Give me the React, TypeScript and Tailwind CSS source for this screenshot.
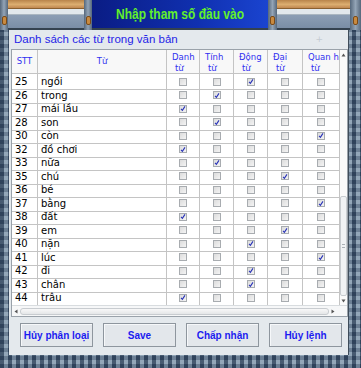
import React from 'react';

type Row = { stt: number; word: string; type: number };

// type: 0 danh, 1 tính, 2 động, 3 đại, 4 quan hệ, -1 none
const rows: Row[] = [
  { stt: 25, word: 'ngồi', type: 2 },
  { stt: 26, word: 'trong', type: 1 },
  { stt: 27, word: 'mái lầu', type: 0 },
  { stt: 28, word: 'son', type: 1 },
  { stt: 30, word: 'còn', type: 4 },
  { stt: 32, word: 'đồ chơi', type: 0 },
  { stt: 33, word: 'nữa', type: 1 },
  { stt: 35, word: 'chú', type: 3 },
  { stt: 36, word: 'bé', type: -1 },
  { stt: 37, word: 'bằng', type: 4 },
  { stt: 38, word: 'đất', type: 0 },
  { stt: 39, word: 'em', type: 3 },
  { stt: 40, word: 'nặn', type: 2 },
  { stt: 41, word: 'lúc', type: 4 },
  { stt: 42, word: 'đi', type: 2 },
  { stt: 43, word: 'chân', type: 2 },
  { stt: 44, word: 'trâu', type: 0 },
];

const headers = [
  ['Danh', 'từ'],
  ['Tính', 'từ'],
  ['Động', 'từ'],
  ['Đại', 'từ'],
  ['Quan hệ', 'từ'],
];

const gridCols = 'grid grid-cols-[26px_129px_33px_34px_34px_35px_37px]';
const plaid =
  'bg-[#5e748c] bg-[linear-gradient(90deg,rgba(36,54,78,0.6)_50%,rgba(190,208,222,0.35)_50%),linear-gradient(0deg,rgba(36,54,78,0.5)_50%,rgba(190,208,222,0.3)_50%)] bg-[length:8px_8px,8px_8px]';

function Check({ on }: { on: boolean }) {
  return (
    <div className="w-[8px] h-[8px] border border-[#a8acb0] bg-[linear-gradient(135deg,#dcdcdc,#f4f4f4)] flex items-center justify-center">
      {on && (
        <svg width="7" height="7" viewBox="0 0 7 7">
          <path d="M1.2 3.8 L2.8 5.6 L5.8 1" stroke="#2a34b8" strokeWidth="1.3" fill="none" />
        </svg>
      )}
    </div>
  );
}

function Wood({ w }: { w: string }) {
  return (
    <div className={`${w} h-full flex flex-col`}>
      <div className="h-[9px] bg-[linear-gradient(180deg,#b8844a,#dcae70_55%,#c08850)] border-b border-[#8a6030]" />
      <div className="h-[6px] bg-[#e2e8ec] border-b border-[#aab6c0]" />
      <div className="flex-1 bg-[linear-gradient(180deg,#8c9eb4,#7a8ea6)]" />
      <div className="h-[2px] bg-[#34424f]" />
    </div>
  );
}

function Pillar({ w }: { w: string }) {
  return (
    <div className={`${w} h-full bg-[linear-gradient(90deg,#55677b,#93a4b6,#55677b)] flex items-end justify-center pb-[5px]`}>
      <div className="w-[5px] h-[9px] rounded-[2px] bg-[#c88a40] border border-[#7a4a18]" />
    </div>
  );
}

function Btn({ label }: { label: string }) {
  return (
    <div className="w-[73px] h-[24px] border border-[#8e969e] bg-[#e3e7eb] shadow-[inset_1px_1px_0_#f6f8fa] flex items-center justify-center whitespace-nowrap text-[10px] font-bold text-[#1c1cf0]" style={{ fontFamily: '"Liberation Sans", sans-serif' }}>
      {label}
    </div>
  );
}

export default function App() {
  return (
    <div className={`w-[361px] h-[368px] flex flex-col overflow-hidden ${plaid}`} style={{ fontFamily: '"DejaVu Sans", sans-serif' }}>
      {/* title bar */}
      <div className="h-[30px] flex">
        <Pillar w="w-[8px]" />
        <Wood w="w-[76px]" />
        <Pillar w="w-[8px]" />
        <div className="w-[176px] h-full bg-[linear-gradient(90deg,#0a1c84,#1030b0_60%,#1a44d0)] border-b-2 border-[#34424f] flex items-center justify-center">
          <span className="text-[15px] font-bold text-[#62f02c] scale-x-[0.8] whitespace-nowrap" style={{ fontFamily: '"Liberation Sans", sans-serif' }}>
            Nhập tham số đầu vào
          </span>
        </div>
        <Pillar w="w-[9px]" />
        <Wood w="w-[73px]" />
        <Pillar w="w-[11px]" />
      </div>

      {/* panel */}
      <div className="flex h-[325px]">
        <div className="w-[9px]" />
        <div className="w-[340px] h-full bg-[#e4e9ed] border-r border-[#3e4c5a] flex flex-col">
          <div className="h-[19px] pl-[5px] flex items-center justify-between pr-[25px]">
            <span className="text-[11.5px] text-[#2424e8]" style={{ fontFamily: '"Liberation Sans", sans-serif' }}>
              Danh sách các từ trong văn bản
            </span>
            <span className="text-[9px] text-[#c4ccd2]">+</span>
          </div>

          {/* table */}
          <div className="ml-[2px] w-[337px] h-[268px] bg-white border border-[#9aa2aa] flex flex-col">
            <div className="flex flex-1 overflow-hidden">
              <div className="w-[328px] flex flex-col">
                <div className={`${gridCols} h-[24px] bg-[#f8f8f8] text-[#3030f0] text-[8.5px]`}>
                  <div className="border-r border-b border-[#c4c4c4] flex items-center justify-center">STT</div>
                  <div className="border-r border-b border-[#c4c4c4] flex items-center justify-center">Từ</div>
                  {headers.map((h, i) => (
                    <div key={i} className="border-r border-b border-[#c4c4c4] flex flex-col items-start pl-[5px] pt-[2px] leading-[11px] overflow-hidden whitespace-nowrap">
                      <span>{h[0]}</span>
                      <span className="pl-[3px]">{h[1]}</span>
                    </div>
                  ))}
                </div>
                {rows.map((r) => (
                  <div key={r.stt} className={`${gridCols} h-[13.5px] text-[10px] text-black`}>
                    <div className="border-r border-b border-[#c4c4c4] flex items-center pl-[3px]">{r.stt}</div>
                    <div className="border-r border-b border-[#c4c4c4] flex items-center pl-[3px]">{r.word}</div>
                    {[0, 1, 2, 3, 4].map((c) => (
                      <div key={c} className="border-r border-b border-[#c4c4c4] flex items-center justify-center">
                        <Check on={r.type === c} />
                      </div>
                    ))}
                  </div>
                ))}
              </div>
              {/* vertical scrollbar */}
              <div className="w-[9px] flex flex-col items-center bg-[#fafafa] pt-[3px] pb-[2px]">
                <svg width="5" height="4" viewBox="0 0 5 4"><path d="M2.5 0.5 L4.5 3.5 L0.5 3.5 Z" fill="#555" /></svg>
                <div className="flex-1" />
                <div className="w-[7px] h-[100px] border border-[#c8ccd0] rounded-[2px] bg-[#f0f2f4] flex items-center justify-center">
                  <div className="w-[3px] h-[4px] border-y border-[#aab0b6]" />
                </div>
                <div className="h-[3px]" />
                <svg width="5" height="4" viewBox="0 0 5 4"><path d="M0.5 0.5 L4.5 0.5 L2.5 3.5 Z" fill="#555" /></svg>
              </div>
            </div>
            {/* horizontal scrollbar */}
            <div className="h-[11px] border-t border-[#d8dcdf] bg-[#f6f7f8] flex items-center px-[2px] gap-[2px]">
              <svg width="4" height="5" viewBox="0 0 4 5"><path d="M0.5 2.5 L3.5 0.5 L3.5 4.5 Z" fill="#555" /></svg>
              <div className="flex-1 h-[7px] border border-[#c8ccd0] rounded-[3px] bg-[linear-gradient(180deg,#f8f8f8,#e4e6e8)]" />
              <svg width="4" height="5" viewBox="0 0 4 5"><path d="M0.5 0.5 L3.5 2.5 L0.5 4.5 Z" fill="#555" /></svg>
              <div className="w-[8px]" />
            </div>
          </div>

          {/* buttons */}
          <div className="mt-[6px] pl-[11px] flex gap-[10px]">
            <Btn label="Hủy phân loại" />
            <Btn label="Save" />
            <Btn label="Chấp nhận" />
            <Btn label="Hủy lệnh" />
          </div>
        </div>
      </div>
    </div>
  );
}
